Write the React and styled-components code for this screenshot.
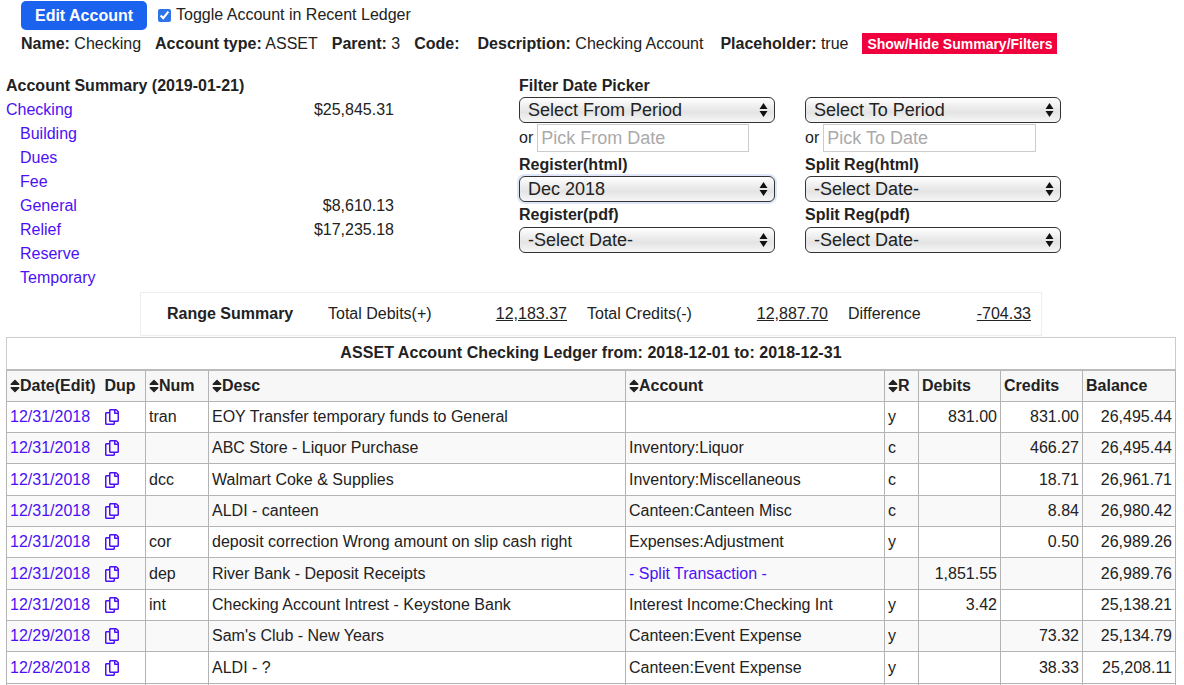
import React from "react";
import styled, { createGlobalStyle } from "styled-components";
import { FaSort, FaRegCopy } from "react-icons/fa";

const GlobalStyle = createGlobalStyle`
  html, body {
    margin: 0;
    height: 685px;
    overflow: hidden;
    background: #fff;
    color: #222;
    font-family: "Liberation Sans", Arial, sans-serif;
    font-size: 16px;
  }
  * { box-sizing: border-box; }
`;

const Page = styled.div`
  width: 1184px;
  padding: 1px 8px 0 6px;
`;
const TopRow = styled.div`
  display: flex;
  align-items: center;
  height: 29px;
  padding-left: 15px;
`;
const EditButton = styled.button`
  width: 126px;
  height: 29px;
  border: 0;
  border-radius: 5px;
  background: #1b62ef;
  color: #fff;
  font: bold 16px "Liberation Sans", Arial, sans-serif;
`;
const ToggleLabel = styled.label`
  display: flex;
  align-items: center;
  margin-left: 11px;
  margin-top: -1px;
  color: #222;
`;
const Check = styled.input`
  width: 13px;
  height: 13px;
  margin: 0 5px 0 0;
  accent-color: #2c74e8;
`;
const InfoRow = styled.div`
  display: flex;
  align-items: center;
  height: 25px;
  margin-top: 1px;
  padding-left: 15px;
`;
const Info = styled.span`
  margin-right: ${(p) => p.$gap || 14}px;
  white-space: nowrap;
`;
const RedButton = styled.span`
  display: block;
  width: 195px;
  height: 21px;
  line-height: 23px;
  text-align: center;
  background: #f0003c;
  color: #fff;
  font-size: 14px;
  font-weight: bold;
`;
const Panels = styled.div`
  display: flex;
  margin-top: 18px;
`;
const Summary = styled.div`
  width: 388px;
  margin-right: 125px;
`;
const Heading = styled.div`
  font-weight: bold;
  height: 24px;
  line-height: 24px;
`;
const SummaryRow = styled.div`
  display: flex;
  justify-content: space-between;
  height: 24px;
  line-height: 24px;
  padding-left: ${(p) => (p.$child ? 14 : 0)}px;
`;
const Link = styled.a`
  color: #4b10f5;
  text-decoration: none;
`;
const Filters = styled.div`
  display: grid;
  grid-template-columns: 256px 256px;
  column-gap: 30px;
  align-content: start;
`;
const FilterTitle = styled.div`
  grid-column: 1 / 3;
  font-weight: bold;
  height: 24px;
  line-height: 24px;
  margin-bottom: -1px;
`;
const FilterCell = styled.div`
  display: flex;
  flex-direction: column;
`;
const FieldLabel = styled.div`
  font-weight: bold;
  height: ${(p) => p.$h}px;
  line-height: 26px;
`;
const SelectWrap = styled.div`
  position: relative;
  height: 26px;
  border-radius: 6px;
  box-shadow: ${(p) => (p.$focus ? "0 0 0 2px #dfe6fb" : "none")};
`;
const Select = styled.select`
  appearance: none;
  display: block;
  width: 100%;
  height: 26px;
  padding: 0 24px 0 8px;
  border: 1px solid #333;
  border-radius: 6px;
  background: linear-gradient(#ffffff, #ececec 40%, #e4e4e4 60%, #f6f6f6);
  color: #222;
  font: 18px "Liberation Sans", Arial, sans-serif;
`;
const Arrows = styled.svg`
  position: absolute;
  top: 5px;
  right: 7px;
  pointer-events: none;
`;
const OrRow = styled.div`
  display: flex;
  align-items: center;
  height: 29px;
`;
const TextBox = styled.input`
  width: ${(p) => p.$w}px;
  height: 28px;
  margin-left: 4px;
  padding: 2px 3px 0;
  border: 1px solid #ccc;
  font: 18px "Liberation Sans", Arial, sans-serif;
  &::placeholder { color: #aaa; opacity: 1; }
`;
const RangeBox = styled.div`
  display: flex;
  align-items: center;
  width: 902px;
  height: 44px;
  margin: 2px 0 1px 134px;
  border: 1px solid #eee;
`;
const RangeItem = styled.span`
  width: ${(p) => p.$w}px;
  padding-left: ${(p) => p.$pad || 0}px;
  font-weight: ${(p) => (p.$bold ? "bold" : "normal")};
  text-align: ${(p) => (p.$right ? "right" : "left")};
  text-decoration: ${(p) => (p.$under ? "underline" : "none")};
`;
const Ledger = styled.table`
  width: 1170px;
  table-layout: fixed;
  border-collapse: collapse;
  color: #222;
`;
const Title = styled.th`
  height: 32px;
  border: 1px solid #ccc;
  border-bottom: 2px solid #bbb;
  background: #fff;
  font-size: 16px;
  letter-spacing: 0.05px;
`;
const Head = styled.th`
  height: 31.75px;
  padding: 0 3px 0 ${(p) => p.$pad || 3}px;
  border: 1px solid #b4b4b4;
  border-left-width: ${(p) => (p.$noLeft ? 0 : 1)}px;
  border-right-width: ${(p) => (p.$noRight ? 0 : 1)}px;
  background: #f7f7f7;
  text-align: left;
  font-size: 16px;
  white-space: nowrap;
  svg { width: 10px; height: 16px; vertical-align: -3px; }
`;
const Row = styled.tr`
  height: 31.33px;
  background: ${(p) => (p.$odd ? "#f9f9f9" : "#fff")};
`;
const Cell = styled.td`
  padding: 0 3px;
  border: 1px solid #b4b4b4;
  border-left-width: ${(p) => (p.$noLeft ? 0 : 1)}px;
  border-right-width: ${(p) => (p.$noRight ? 0 : 1)}px;
  text-align: ${(p) => (p.$right ? "right" : "left")};
  white-space: nowrap;
  overflow: hidden;
`;
const CopyIcon = styled(FaRegCopy)`
  display: block;
  width: 14px;
  height: 16px;
  margin-left: 3px;
  color: #4b10f5;
`;

const summary = [
  ["Building", ""],
  ["Dues", ""],
  ["Fee", ""],
  ["General", "$8,610.13"],
  ["Relief", "$17,235.18"],
  ["Reserve", ""],
  ["Temporary", ""],
];

const rows = [
  ["12/31/2018", "tran", "EOY Transfer temporary funds to General", "", "y", "831.00", "831.00", "26,495.44"],
  ["12/31/2018", "", "ABC Store - Liquor Purchase", "Inventory:Liquor", "c", "", "466.27", "26,495.44"],
  ["12/31/2018", "dcc", "Walmart Coke & Supplies", "Inventory:Miscellaneous", "c", "", "18.71", "26,961.71"],
  ["12/31/2018", "", "ALDI - canteen", "Canteen:Canteen Misc", "c", "", "8.84", "26,980.42"],
  ["12/31/2018", "cor", "deposit correction Wrong amount on slip cash right", "Expenses:Adjustment", "y", "", "0.50", "26,989.26"],
  ["12/31/2018", "dep", "River Bank - Deposit Receipts", "- Split Transaction -", "", "1,851.55", "", "26,989.76"],
  ["12/31/2018", "int", "Checking Account Intrest - Keystone Bank", "Interest Income:Checking Int", "y", "3.42", "", "25,138.21"],
  ["12/29/2018", "", "Sam's Club - New Years", "Canteen:Event Expense", "y", "", "73.32", "25,134.79"],
  ["12/28/2018", "", "ALDI - ?", "Canteen:Event Expense", "y", "", "38.33", "25,208.11"],
];

function DateSelect({ value, focus }) {
  return (
    <SelectWrap $focus={focus}>
      <Select defaultValue={value}>
        <option>{value}</option>
      </Select>
      <Arrows width="9" height="16" viewBox="0 0 9 16">
        <path d="M4.5 1 L8.5 7 L0.5 7 Z M4.5 15 L8.5 9 L0.5 9 Z" fill="#111" />
      </Arrows>
    </SelectWrap>
  );
}

export default function App() {
  return (
    <Page>
      <GlobalStyle />
      <TopRow>
        <EditButton>Edit Account</EditButton>
        <ToggleLabel>
          <Check type="checkbox" defaultChecked />
          Toggle Account in Recent Ledger
        </ToggleLabel>
      </TopRow>
      <InfoRow>
        <Info><b>Name:</b> Checking</Info>
        <Info><b>Account type:</b> ASSET</Info>
        <Info><b>Parent:</b> 3</Info>
        <Info $gap={18}><b>Code:</b></Info>
        <Info $gap={17}><b>Description:</b> Checking Account</Info>
        <Info $gap={14}><b>Placeholder:</b> true</Info>
        <RedButton>Show/Hide Summary/Filters</RedButton>
      </InfoRow>
      <Panels>
        <Summary>
          <Heading>Account Summary (2019-01-21)</Heading>
          <SummaryRow>
            <Link>Checking</Link>
            <span>$25,845.31</span>
          </SummaryRow>
          {summary.map(([name, amount]) => (
            <SummaryRow $child key={name}>
              <Link>{name}</Link>
              <span>{amount}</span>
            </SummaryRow>
          ))}
        </Summary>
        <Filters>
          <FilterTitle>Filter Date Picker</FilterTitle>
          <FilterCell>
            <DateSelect value="Select From Period" />
            <OrRow>or<TextBox $w={212} placeholder="Pick From Date" /></OrRow>
            <FieldLabel $h={24}>Register(html)</FieldLabel>
            <DateSelect value="Dec 2018" focus />
            <FieldLabel $h={25}>Register(pdf)</FieldLabel>
            <DateSelect value="-Select Date-" />
          </FilterCell>
          <FilterCell>
            <DateSelect value="Select To Period" />
            <OrRow>or<TextBox $w={213} placeholder="Pick To Date" /></OrRow>
            <FieldLabel $h={24}>Split Reg(html)</FieldLabel>
            <DateSelect value="-Select Date-" />
            <FieldLabel $h={25}>Split Reg(pdf)</FieldLabel>
            <DateSelect value="-Select Date-" />
          </FilterCell>
        </Filters>
      </Panels>
      <RangeBox>
        <RangeItem $bold $pad={26} $w={187}>Range Summary</RangeItem>
        <RangeItem $w={120}>Total Debits(+)</RangeItem>
        <RangeItem $right $under $w={119}>12,183.37</RangeItem>
        <RangeItem $pad={20} $w={170}>Total Credits(-)</RangeItem>
        <RangeItem $right $under $w={91}>12,887.70</RangeItem>
        <RangeItem $pad={20} $w={128}>Difference</RangeItem>
        <RangeItem $right $under $w={75}>-704.33</RangeItem>
      </RangeBox>
      <Ledger>
        <colgroup>
          <col style={{ width: 92 }} />
          <col style={{ width: 47 }} />
          <col style={{ width: 63 }} />
          <col style={{ width: 417 }} />
          <col style={{ width: 259 }} />
          <col style={{ width: 34 }} />
          <col style={{ width: 82 }} />
          <col style={{ width: 82 }} />
          <col style={{ width: 93 }} />
        </colgroup>
        <thead>
          <tr>
            <Title colSpan={9}>ASSET Account Checking Ledger from: 2018-12-01 to: 2018-12-31</Title>
          </tr>
          <tr>
            <Head $noRight><FaSort />Date(Edit)</Head>
            <Head $noLeft $pad={6}>Dup</Head>
            <Head><FaSort />Num</Head>
            <Head><FaSort />Desc</Head>
            <Head><FaSort />Account</Head>
            <Head><FaSort />R</Head>
            <Head>Debits</Head>
            <Head>Credits</Head>
            <Head>Balance</Head>
          </tr>
        </thead>
        <tbody>
          {rows.map((r, i) => (
            <Row key={i} $odd={i % 2 === 1}>
              <Cell $noRight><Link>{r[0]}</Link></Cell>
              <Cell $noLeft><CopyIcon /></Cell>
              <Cell>{r[1]}</Cell>
              <Cell>{r[2]}</Cell>
              <Cell>{r[3].startsWith("- Split") ? <Link>{r[3]}</Link> : r[3]}</Cell>
              <Cell>{r[4]}</Cell>
              <Cell $right>{r[5]}</Cell>
              <Cell $right>{r[6]}</Cell>
              <Cell $right>{r[7]}</Cell>
            </Row>
          ))}
          <Row $odd>
            <Cell $noRight /><Cell $noLeft /><Cell /><Cell /><Cell /><Cell /><Cell /><Cell /><Cell />
          </Row>
        </tbody>
      </Ledger>
    </Page>
  );
}
